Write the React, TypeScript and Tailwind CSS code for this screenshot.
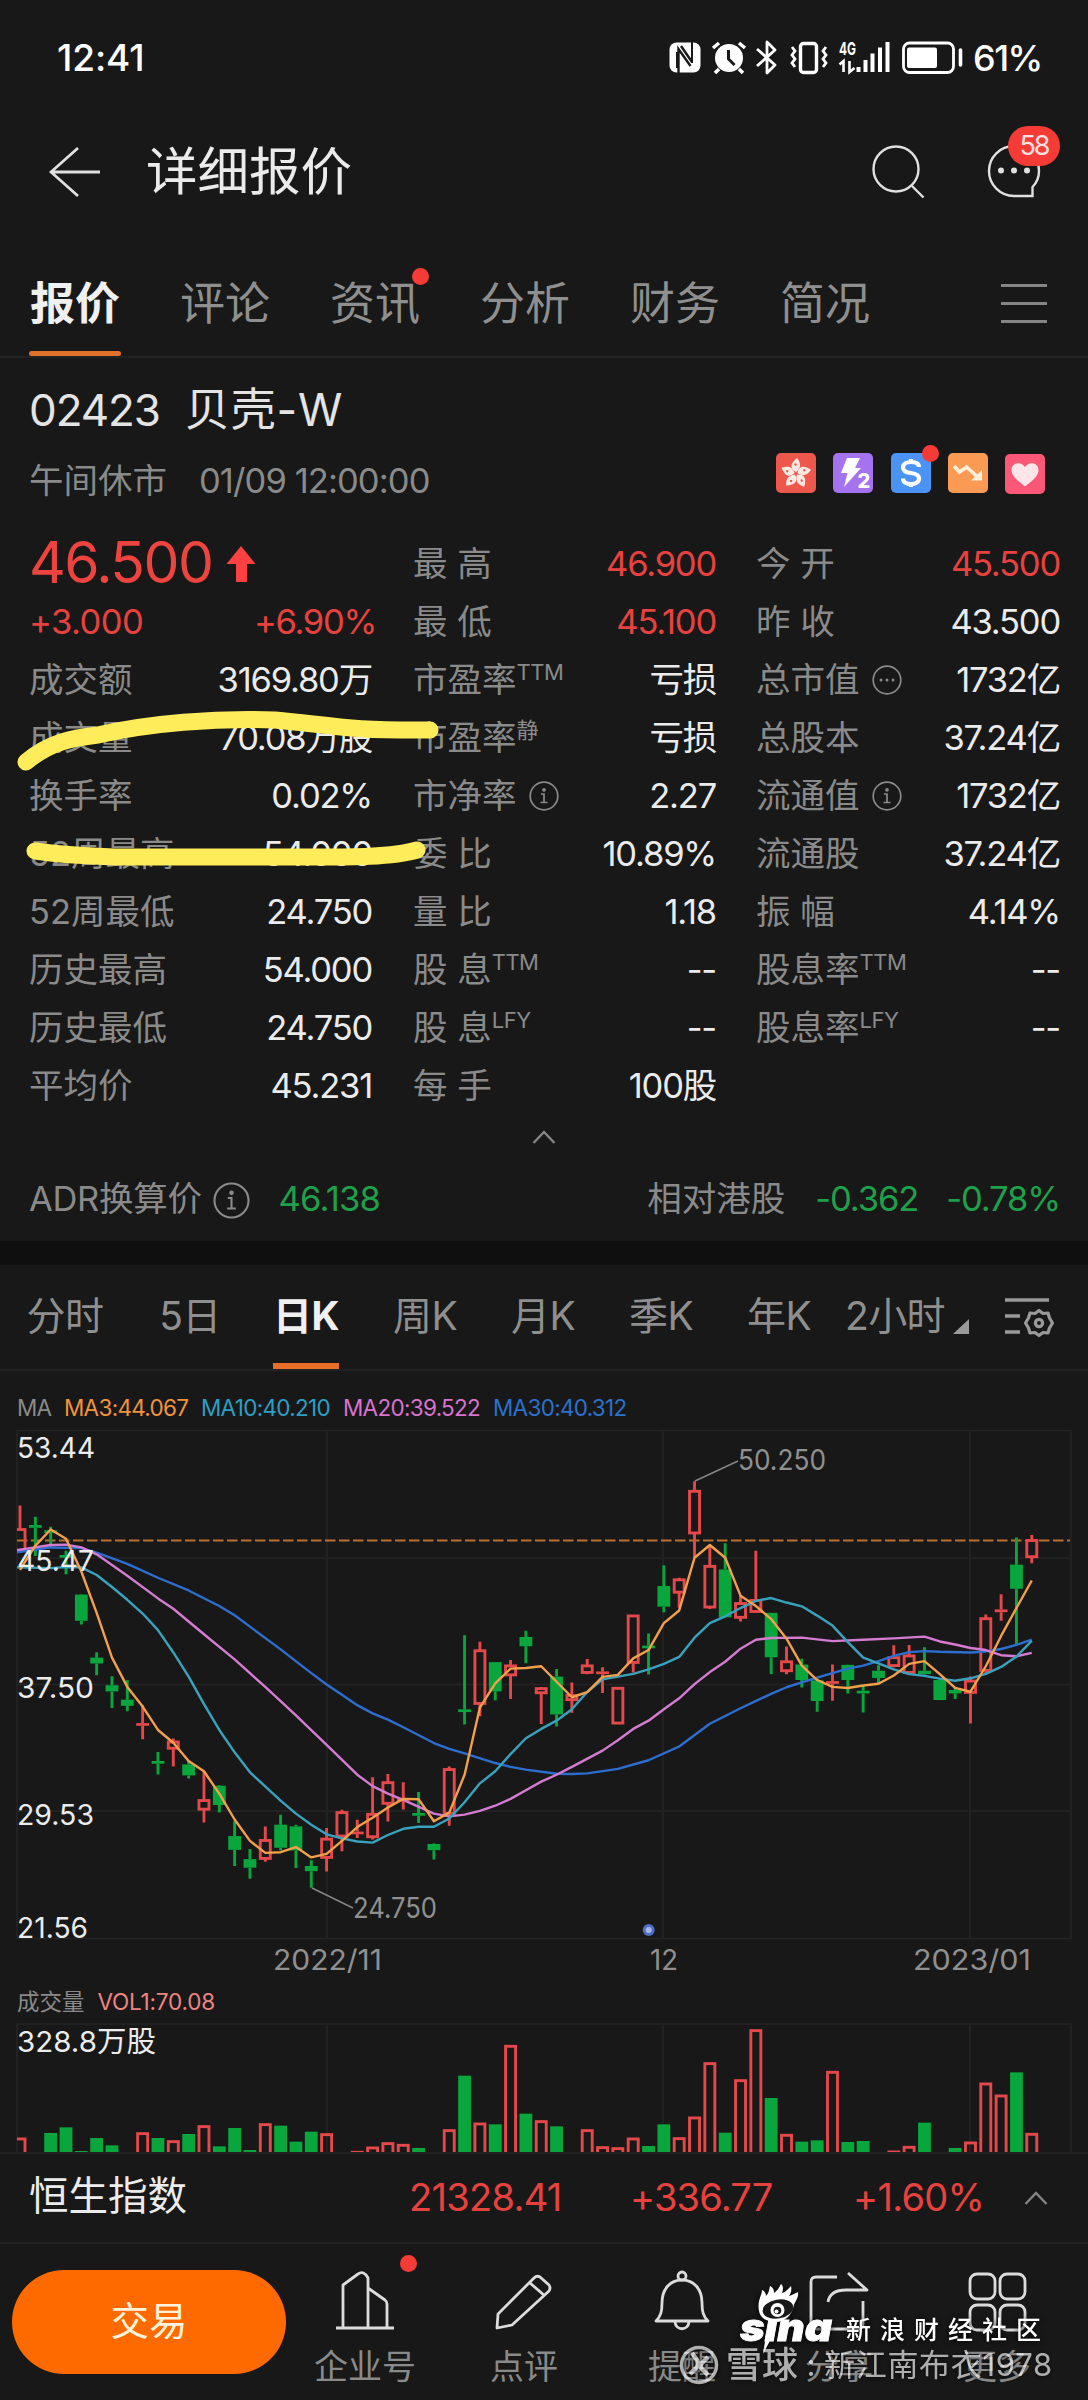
import type { ReactNode } from 'react';
import clsx from 'clsx';

type Tone = 'red' | 'white' | 'green';

interface QuoteCell {
  label: string;
  sup?: string;
  icon?: 'info' | 'more';
  value: string;
  tone?: Tone;
}

const TONES: Record<Tone, string> = {
  red: 'text-[#e8423f]',
  white: 'text-[#ebebeb]',
  green: 'text-[#1fa04a]',
};

const LEFT_CELLS: QuoteCell[] = [
  { label: '成交额', value: '3169.80万' },
  { label: '成交量', value: '70.08万股' },
  { label: '换手率', value: '0.02%' },
  { label: '52周最高', value: '54.000' },
  { label: '52周最低', value: '24.750' },
  { label: '历史最高', value: '54.000' },
  { label: '历史最低', value: '24.750' },
  { label: '平均价', value: '45.231' },
];

const MIDDLE_CELLS: QuoteCell[] = [
  { label: '最 高', value: '46.900', tone: 'red' },
  { label: '最 低', value: '45.100', tone: 'red' },
  { label: '市盈率', sup: 'TTM', value: '亏损' },
  { label: '市盈率', sup: '静', value: '亏损' },
  { label: '市净率', icon: 'info', value: '2.27' },
  { label: '委 比', value: '10.89%' },
  { label: '量 比', value: '1.18' },
  { label: '股 息', sup: 'TTM', value: '--' },
  { label: '股 息', sup: 'LFY', value: '--' },
  { label: '每 手', value: '100股' },
];

const RIGHT_CELLS: QuoteCell[] = [
  { label: '今 开', value: '45.500', tone: 'red' },
  { label: '昨 收', value: '43.500' },
  { label: '总市值', icon: 'more', value: '1732亿' },
  { label: '总股本', value: '37.24亿' },
  { label: '流通值', icon: 'info', value: '1732亿' },
  { label: '流通股', value: '37.24亿' },
  { label: '振 幅', value: '4.14%' },
  { label: '股息率', sup: 'TTM', value: '--' },
  { label: '股息率', sup: 'LFY', value: '--' },
];

// ── Chart data ──
// [direction, high, body top, body bottom, low, volume top]
// prices are offsets from the top of the chart, see y(); volume 0 = no bar
type Candle = ['r' | 'g', number, number, number, number, number];

const CANDLES: Candle[] = [
  ['r', 248, 318, 378, 380, 533], ['g', 281, 305, 313, 395, 0], ['g', 310, 320, 328, 372, 519],
  ['g', 380, 392, 400, 448, 502], ['g', 505, 507, 583, 594, 573], ['g', 674, 690, 707, 741, 534],
  ['g', 744, 770, 788, 836, 556], ['g', 756, 812, 830, 846, 0], ['r', 828, 880, 888, 927, 517],
  ['g', 964, 990, 998, 1029, 534], ['r', 925, 935, 953, 1006, 541], ['g', 990, 1000, 1032, 1041, 522],
  ['r', 1020, 1105, 1130, 1169, 496], ['g', 1060, 1062, 1118, 1140, 559], ['g', 1165, 1208, 1248, 1295, 504],
  ['g', 1246, 1275, 1300, 1332, 570], ['r', 1180, 1221, 1273, 1283, 490], ['g', 1146, 1175, 1242, 1250, 497],
  ['g', 1175, 1180, 1250, 1301, 545], ['g', 1278, 1295, 1310, 1358, 515], ['r', 1185, 1217, 1270, 1311, 520],
  ['r', 1132, 1140, 1208, 1252, 0], ['r', 1161, 1195, 1203, 1214, 573], ['r', 1037, 1145, 1210, 1218, 560],
  ['r', 1028, 1053, 1113, 1166, 547], ['r', 1052, 1099, 1106, 1131, 552], ['g', 1080, 1141, 1149, 1170, 564],
  ['g', 1230, 1231, 1249, 1276, 0], ['r', 1006, 1015, 1142, 1178, 508], ['g', 625, 840, 848, 884, 347],
  ['r', 644, 670, 823, 860, 488], ['g', 703, 703, 788, 814, 493], ['r', 697, 714, 740, 810, 255],
  ['g', 612, 630, 657, 706, 461], ['r', 775, 780, 792, 883, 481], ['g', 723, 745, 855, 890, 499],
  ['r', 762, 800, 812, 850, 0], ['r', 694, 714, 733, 738, 508], ['r', 718, 730, 738, 793, 559],
  ['r', 775, 779, 880, 882, 562], ['r', 566, 569, 704, 733, 533], ['g', 620, 655, 663, 739, 558],
  ['g', 422, 482, 542, 558, 493], ['r', 458, 464, 500, 545, 532], ['r', 178, 207, 328, 400, 470],
  ['r', 365, 425, 543, 549, 307], ['g', 358, 434, 573, 573, 518], ['r', 510, 533, 573, 585, 358],
  ['r', 380, 524, 556, 558, 208], ['g', 560, 560, 689, 738, 414], ['r', 658, 702, 728, 738, 522],
  ['g', 693, 710, 755, 777, 545], ['g', 750, 756, 816, 847, 541], ['r', 710, 758, 766, 815, 333],
  ['g', 710, 711, 755, 794, 546], ['g', 770, 786, 794, 849, 543], ['g', 712, 728, 749, 767, 0],
  ['r', 654, 690, 713, 718, 572], ['r', 653, 685, 733, 738, 558], ['g', 660, 728, 738, 740, 488],
  ['g', 753, 755, 813, 813, 0], ['g', 776, 784, 794, 810, 564], ['r', 745, 758, 791, 881, 545],
  ['r', 565, 577, 727, 738, 368], ['r', 506, 550, 558, 583, 404], ['g', 341, 420, 490, 651, 337],
  ['r', 334, 350, 397, 416, 519],
];

// [candle index, offset]
type Point = [number, number];

const MA3: Point[] = [
  435, 365, 318, 345, 440, 560, 690, 775, 832, 900, 937, 990, 1020, 1085, 1160, 1222, 1257, 1255, 1240, 1270, 1260,
  1222, 1182, 1155, 1125, 1100, 1101, 1165, 1140, 1030, 835, 765, 722, 720, 715, 760, 805, 790, 746, 740, 692, 668,
  590, 553, 400, 363, 400, 510, 540, 578, 635, 713, 755, 775, 778, 771, 766, 742, 708, 700, 738, 778, 789, 715, 627,
  546, 466,
].map((v, i) => [i, v]);

const MA10: Point[] = [
  [-0.2, 428], [2, 430], [3, 427], [4, 428], [5, 450], [6, 485], [7, 522], [8, 562], [9, 610], [10, 675], [11, 745],
  [12, 825], [13, 900], [14, 965], [15, 1023], [17, 1105], [18, 1143], [19, 1175], [20, 1203], [21, 1215], [22, 1224],
  [23, 1227], [24, 1205], [25, 1187], [26, 1181], [27, 1181], [28, 1157], [29, 1110], [30, 1055], [31, 1020],
  [32, 970], [33, 924], [34, 897], [35, 873], [36, 840], [37, 790], [38, 753], [39, 745], [40, 737], [41, 724],
  [42, 708], [43, 688], [44, 632], [45, 590], [46, 570], [47, 546], [48, 525], [49, 517], [50, 530], [51, 541],
  [52, 568], [53, 597], [54, 645], [55, 690], [56, 707], [57, 724], [58, 738], [59, 743], [60, 751], [61, 757],
  [62, 750], [63, 737], [64, 717], [65, 687], [66, 641],
];

const MA20: Point[] = [
  [-0.2, 378], [2, 363], [3, 362], [4, 370], [5, 390], [7, 452], [9, 518], [10, 548], [12, 622], [14, 695],
  [16, 775], [18, 858], [20, 943], [22, 1030], [23, 1063], [24, 1085], [25, 1103], [27, 1143], [28, 1151],
  [29, 1146], [30, 1135], [31, 1120], [32, 1100], [33, 1075], [34, 1050], [35, 1030], [36, 1007], [38, 960],
  [39, 930], [40, 897], [41, 873], [42, 840], [43, 808], [44, 767], [45, 732], [46, 702], [47, 664], [48, 638],
  [49, 633], [51, 632], [53, 642], [55, 638], [57, 634], [59, 629], [60, 643], [61, 652], [62, 662], [63, 668],
  [64, 683], [65, 686], [66, 676],
];

const MA30: Point[] = [
  [-0.2, 384], [2, 370], [4, 372], [5, 385], [7, 418], [9, 458], [11, 495], [13, 540], [14, 567], [15, 600],
  [17, 666], [19, 735], [20, 768], [21, 798], [22, 828], [23, 852], [24, 870], [25, 892], [27, 938], [28, 955],
  [29, 968], [31, 996], [32, 1007], [33, 1015], [35, 1027], [36, 1028], [37, 1026], [39, 1013], [41, 988],
  [43, 948], [45, 882], [47, 837], [49, 795], [50, 776], [51, 762], [52, 748], [53, 735], [54, 722], [55, 713],
  [56, 700], [57, 685], [58, 674], [59, 671], [60, 673], [62, 675], [63, 672], [64, 665], [65, 653], [66, 638],
];

const UP = '#e5484a';
const DOWN = '#08a63c';

const x = (i: number) => 20 + i * 15.33;
const y = (v: number) => v * 0.3444;
const line = (points: Point[]) => points.map(([i, v]) => `${x(i)},${y(v)}`).join(' ');

// ── Icons ──
function StatusIcons() {
  return (
    <svg className="h-[44px] w-[296px]" viewBox="668 36 296 44" fill="none" stroke="#fff">
      <rect x="668.5" y="42.5" width="31" height="30" rx="7" fill="#fff" stroke="none" />
      <path d="M677.500 73V49l12 17M680 46l11 16" stroke="#181818" strokeWidth="2.400" />
      <path d="M691 42v21M676 52v16" stroke="#181818" strokeWidth="2" />
      <circle cx="728" cy="58" r="14" fill="#fff" stroke="none" />
      <path d="M712 48l6-5M744 48l-6-5M718 69l-4 4M738 69l4 4" strokeWidth="3.500" />
      <path d="M727.500 50v9l6 6" stroke="#181818" strokeWidth="3" />
      <path d="M756 49l18 16-8 8V42l8 8-18 16" strokeWidth="2.800" strokeLinejoin="round" />
      <rect x="799.500" y="43.500" width="16" height="29" rx="3" strokeWidth="3.400" />
      <path d="M791 47l3 4-3 4 3 4-3 4 3 4M825 47l-3 4 3 4-3 4 3 4-3 4" strokeWidth="2.800" />
      <text x="838" y="55" fontSize="18" fontWeight="700" fill="#fff" stroke="none" textLength="17" lengthAdjust="spacingAndGlyphs">
        4G
      </text>
      <path d="M838.500 64.500l4-3.500v11M848.500 61v11l5-4" strokeWidth="2.600" />
      <path d="M857.500 67v5M864.500 60v12M871.500 53.500v18.500M879 47.500v24.500M886.500 42v30" strokeWidth="4" />
      <rect x="902.500" y="43" width="50" height="29.500" rx="6" strokeWidth="2.800" />
      <rect x="906" y="47.500" width="30" height="20.500" rx="2" fill="#fff" stroke="none" />
      <path d="M959.500 50v15" strokeWidth="3.600" strokeLinecap="round" />
    </svg>
  );
}

function CircleIcon({ kind, className }: { kind: 'info' | 'more'; className?: string }) {
  return (
    <svg className={clsx('shrink-0', className)} viewBox="0 0 30 30" fill="none" stroke="#8a8a8a" strokeWidth="1.700">
      <circle cx="15" cy="15" r="13.800" />
      {kind === 'info' ? (
        <>
          <path d="M12 13h3v8.500M11.500 21.500h7" />
          <circle cx="15" cy="8.800" r="1" fill="#8a8a8a" />
        </>
      ) : (
        <g fill="#8a8a8a" stroke="none">
          <circle cx="9" cy="15" r="1.500" />
          <circle cx="15" cy="15" r="1.500" />
          <circle cx="21" cy="15" r="1.500" />
        </g>
      )}
    </svg>
  );
}

function Chevron() {
  return (
    <svg className="h-[14px] w-[24px]" viewBox="0 0 24 14" fill="none" stroke="#858585" strokeWidth="2.400">
      <path d="M1.500 13L12 2l10.500 11" />
    </svg>
  );
}

function Dot({ className }: { className: string }) {
  return <span className={clsx('absolute size-[17px] rounded-full bg-[#f53b36]', className)} />;
}

function Tile({ className, children }: { className: string; children: ReactNode }) {
  return (
    <span className={clsx('relative size-[40px] rounded-[5px]', className)}>
      <svg className="size-[40px]" viewBox="0 0 40 40" fill="none">
        {children}
      </svg>
    </span>
  );
}

function TagIcons() {
  return (
    <div className="flex h-[41px] w-[269px] justify-between">
      <Tile className="bg-[#ee574c]">
        {[0, 72, 144, 216, 288].map((deg) => (
          <g key={deg} transform={`rotate(${deg} 20 20.500)`}>
            <path d="M20 19c-6-3-6.500-8 1-14 4 5 4.500 10-1 14z" fill="#ffe9e4" />
            <circle cx="19.500" cy="11.500" r="1.200" fill="#ee574c" />
          </g>
        ))}
      </Tile>
      <Tile className="bg-[#a573ef]">
        <path d="M14 5h13l-5 10h6L11 34l3.500-14H8z" fill="#fff" />
        <text x="24.500" y="34.500" fontSize="20" fontWeight="800" fill="#fff" stroke="#a573ef" strokeWidth="2" paintOrder="stroke">
          2
        </text>
      </Tile>
      <div className="relative flex">
        <Tile className="bg-[#4b93f4]">
          <path d="M28 14c0-4-4-5-8-5s-8 1.500-8 5.500 4 5 8 5.500 8 1.500 8 5.500-4 5.500-8 5.500-8-1.500-8-5.500M20 6v4M20 30v4" stroke="#fff" strokeWidth="4.200" />
        </Tile>
        <Dot className="-top-[8px] left-[31px]" />
      </div>
      <Tile className="bg-[#fb9a52]">
        <path d="M6 13l5.500 6L18.500 14l10 9" stroke="#ffeeda" strokeWidth="3.600" />
        <path d="M34 17v10.500H23z" fill="#ffeeda" />
      </Tile>
      <Tile className="mt-px bg-[#fb5877]">
        <path d="M20 32.500C10 25 6.500 20.500 6.500 16c0-8 10-9 13.500-3 3.500-6 13.500-5 13.500 3 0 4.500-3.500 9-13.500 16.500z" fill="#ffe4ea" />
      </Tile>
    </div>
  );
}

// ── Sections ──
function StatusBar() {
  return (
    <div className="flex h-[116px] items-center justify-between pr-[48px] pl-[57px] font-medium text-white">
      <span className="text-[37px] tracking-[-0.100px]">12:41</span>
      <div className="flex items-center gap-2">
        <StatusIcons />
        <span className="w-[67px] text-[36px] tracking-[-1.500px]">61%</span>
      </div>
    </div>
  );
}

function Header() {
  return (
    <div className="flex h-[112px] items-center pr-[28px] pl-[49px]">
      <svg className="h-[52px] w-[52px]" viewBox="0 0 52 52" fill="none" stroke="#e0e0e0" strokeWidth="2.800">
        <path d="M51 26H2M29 2L2 26l27 24" />
      </svg>
      <h1 className="ml-[45px] text-[51.500px] leading-none text-[#ebebeb]">详细报价</h1>
      <svg className="ml-auto h-[56px] w-[56px]" viewBox="870 144 56 56" fill="none" stroke="#e0e0e0" strokeWidth="2.400">
        <circle cx="895" cy="169" r="22.500" />
        <path d="M911 186l11.500 11.500" />
      </svg>
      <div className="relative ml-[58px] h-[56px] w-[75px]">
        <svg className="h-[56px] w-[60px]" viewBox="984 144 60 56" fill="none" stroke="#e0e0e0" strokeWidth="2.400">
          <path d="M1031.500 196H1013a25 25 0 1 1 25-25c0 6-2.500 12-6.500 16z" />
          <g fill="#e0e0e0" stroke="none">
            <circle cx="1000" cy="170.500" r="3" />
            <circle cx="1013" cy="170.500" r="3" />
            <circle cx="1026" cy="170.500" r="3" />
          </g>
        </svg>
        <span className="absolute -top-[18px] left-[23px] flex h-[40px] w-[52px] items-center justify-center rounded-full bg-[#f53b36] text-[27px] tracking-[-2px] text-[#ffe2e0]">
          58
        </span>
      </div>
    </div>
  );
}

function MainTabs() {
  return (
    <div className="flex h-[130px] items-stretch border-b-2 border-[#222] pr-[40px] pl-[29px]">
      <div className="flex gap-[58px] text-[45px] text-[#8f8f8f]">
        {['报价', '评论', '资讯', '分析', '财务', '简况'].map((tab, i) => (
          <div
            key={tab}
            className={clsx(
              'relative flex w-[92px] items-center justify-center leading-none whitespace-nowrap',
              i === 0 && 'font-bold text-[#f0f0f0]',
            )}
          >
            <span className="mt-[22px]">{tab}</span>
            {i === 0 && <span className="absolute bottom-0 left-0 h-[5px] w-[92px] rounded-sm bg-[#e0702a]" />}
            {tab === '资讯' && <Dot className="top-[40px] left-[83px]" />}
          </div>
        ))}
      </div>
      <svg className="mt-[54px] ml-auto h-[42px] w-[48px]" viewBox="0 0 48 42" stroke="#858585" strokeWidth="2.800">
        <path d="M1 3.500h46M1 21.500h46M1 39.500h46" />
      </svg>
    </div>
  );
}

function StockTitle() {
  return (
    <div className="flex h-[177px] flex-col pr-[43px] pl-[29px]">
      <div className="mt-[25px] flex h-[54px] items-center gap-[25px] text-[44px] text-[#e4e4e4]">
        <span className="tracking-[-1.100px]">02423</span>
        <span className="text-[45px] tracking-[0.800px]">贝壳-W</span>
      </div>
      <div className="mt-[16px] flex h-[56px] items-center text-[34.500px] text-[#8a8a8a]">
        <span>午间休市</span>
        <span className="ml-[32px] tracking-[-0.900px]">01/09 12:00:00</span>
        <div className="mt-[-15px] ml-auto">
          <TagIcons />
        </div>
      </div>
    </div>
  );
}

function Cell({ cell }: { cell: QuoteCell }) {
  return (
    <div className="flex h-[58px] items-center text-[34.500px] whitespace-nowrap">
      <span className="text-[#8a8a8a]">{cell.label}</span>
      {cell.sup && <sup className="-top-[8px] text-[22px] tracking-[-0.500px] text-[#8a8a8a]">{cell.sup}</sup>}
      {cell.icon && <CircleIcon kind={cell.icon} className="ml-[12px] size-[30px]" />}
      <span className={clsx('ml-auto tracking-[-1.200px]', TONES[cell.tone ?? 'white'])}>{cell.value}</span>
    </div>
  );
}

function QuoteGrid() {
  return (
    <div className="relative">
      <div className="flex pl-[29px]">
        <div className="w-[343px]">
          <div className="flex h-[58px] items-center text-[#ee4440]">
            <span className="-mt-[2px] text-[57px] tracking-[-1.500px]">46.500</span>
            <svg className="ml-[14px] h-[36px] w-[30px]" viewBox="0 0 30 36">
              <path d="M15 0l14.500 18H21v18H10V18H.5z" fill="#fb4141" />
            </svg>
          </div>
          <div className="-mr-[4px] flex h-[58px] items-center justify-between text-[34.500px] text-[#e8423f]">
            <span className="tracking-[-0.500px]">+3.000</span>
            <span className="tracking-[-1.300px]">+6.90%</span>
          </div>
          {LEFT_CELLS.map((cell) => (
            <Cell key={cell.label} cell={cell} />
          ))}
        </div>
        <div className="ml-[41px] w-[303px]">
          {MIDDLE_CELLS.map((cell) => (
            <Cell key={cell.label + (cell.sup ?? '')} cell={cell} />
          ))}
        </div>
        <div className="ml-[40px] w-[304px]">
          {RIGHT_CELLS.map((cell) => (
            <Cell key={cell.label + (cell.sup ?? '')} cell={cell} />
          ))}
        </div>
      </div>
      {/* Hand-drawn marker strokes above and below 成交量 / 换手率 */}
      <svg
        className="absolute top-[165px] left-0 h-[180px] w-[460px]"
        viewBox="0 700 460 180"
        fill="none"
        stroke="#ffec5a"
        strokeWidth="17"
        strokeLinecap="round"
        strokeLinejoin="round"
      >
        <path d="M26 762C50 742 72 738 98 735C150 723 215 718 275 720C330 725 350 731 430 730" />
        <path d="M35 851C70 856 90 856 120 857H300C340 857 390 858 417 850" />
      </svg>
    </div>
  );
}

function AdrRow() {
  return (
    <>
      <div className="flex h-[41px] items-center justify-center pt-[2px]">
        <Chevron />
      </div>
      <div className="flex h-[85px] items-center pr-[28px] pl-[29px] text-[34.500px] text-[#8a8a8a]">
        <span className="tracking-[-0.300px]">ADR换算价</span>
        <CircleIcon kind="info" className="mt-[4px] ml-[11px] size-[37px]" />
        <span className="ml-[29px] tracking-[-0.800px] text-[#1fa04a]">46.138</span>
        <span className="ml-auto">相对港股</span>
        <span className="ml-[30px] tracking-[-1.100px] text-[#1fa04a]">-0.362</span>
        <span className="ml-[28px] tracking-[-1.100px] text-[#1fa04a]">-0.78%</span>
      </div>
      <div className="h-[24px] bg-[#0f0f0f]" />
    </>
  );
}

const PERIODS = [
  { label: '分时', box: 'w-[80px] ml-[25px]' },
  { label: '5日', box: 'w-[66px] ml-[52px]' },
  { label: '日K', box: 'w-[66px] ml-[50px]' },
  { label: '周K', box: 'w-[66px] ml-[53px]' },
  { label: '月K', box: 'w-[66px] ml-[52px]' },
  { label: '季K', box: 'w-[66px] ml-[52px]' },
  { label: '年K', box: 'w-[66px] ml-[52px]' },
  { label: '2小时', box: 'w-[102px] ml-[32px]' },
];

function PeriodTabs() {
  return (
    <div className="flex h-[106px] border-b-2 border-[#222] text-[39px] text-[#8f8f8f]">
      {PERIODS.map(({ label, box }) => (
        <div
          key={label}
          className={clsx(
            'relative flex items-center justify-center pb-[2px] tracking-[-0.600px] whitespace-nowrap',
            box,
            label === '日K' && 'font-bold text-[#f0f0f0]',
          )}
        >
          {label}
          {label === '日K' && <span className="absolute bottom-0 left-0 h-[6px] w-[66px] bg-[#e86f28]" />}
        </div>
      ))}
      <svg className="mt-[54px] ml-[7px] h-[15px] w-[16px]" viewBox="0 0 16 15">
        <path d="M16 0v15H0z" fill="#9a9a9a" />
      </svg>
      <svg className="mt-[31px] ml-[35px] h-[42px] w-[50px]" viewBox="1004 1296 50 42" fill="none" stroke="#9a9a9a" strokeWidth="3.200">
        <path d="M1005 1300h44M1005 1316h15M1005 1332h15" strokeWidth="3.600" />
        <path
          d="M1039 1310.500l4 3 5-.5 1.500 5 3 5-3 5-1.500 5-5-.5-4 3-4-3-5 .5-1.500-5-3-5 3-5 1.500-5 5 .5z"
          strokeLinejoin="round"
        />
        <circle cx="1039" cy="1323" r="3.600" />
      </svg>
    </div>
  );
}

function MaLegend() {
  return (
    <div className="flex h-[49px] items-center pt-[25px] pl-[17px] text-[22.500px] tracking-[-0.700px]">
      <span className="w-[47px] text-[#8a8a8a]">MA</span>
      <span className="w-[137px] text-[#f0943c]">MA3:44.067</span>
      <span className="w-[142px] text-[#2c9fc4]">MA10:40.210</span>
      <span className="w-[150px] text-[#d873cf]">MA20:39.522</span>
      <span className="text-[#2a72cc]">MA30:40.312</span>
    </div>
  );
}

const PRICE_LABELS = [
  { text: '53.44', y: 37.500, w: 78 },
  { text: '45.47', y: 150.500, w: 77 },
  { text: '37.50', y: 277.500, w: 77 },
  { text: '29.53', y: 404.500, w: 77 },
  { text: '21.56', y: 517.500, w: 71 },
];

function KLineChart() {
  return (
    <svg className="block h-[556px] w-[1088px]" viewBox="0 0 1088 556" fill="none">
      <g stroke="#242424" strokeWidth="1.500">
        <rect x="17" y="10.500" width="1054" height="508" />
        <path d="M17 138h1054M17 264.500h1054M17 391h1054M327 10.500v508M663 10.500v508M970 10.500v508" />
      </g>
      <path d="M17 120.500h1053" stroke="#b8702f" strokeWidth="2.200" strokeDasharray="10.500 3.500" />
      <defs>
        <clipPath id="plot">
          <rect x="17" y="0" width="1054" height="556" />
        </clipPath>
      </defs>
      <g clipPath="url(#plot)">
        {CANDLES.map(([dir, high, top, bottom, low], i) => {
          const color = dir === 'r' ? UP : DOWN;
          const height = y(bottom - top);
          return (
            <g key={i} stroke={color} strokeWidth="2.900">
              <path d={`M${x(i)} ${y(high)}V${y(top)}M${x(i)} ${y(bottom)}V${y(low)}`} />
              {dir === 'r' && height > 3 ? (
                <rect x={x(i) - 5} y={y(top)} width="10" height={height} />
              ) : (
                <rect x={x(i) - 6.400} y={y(top)} width="12.800" height={height} fill={color} stroke="none" />
              )}
            </g>
          );
        })}
        <g strokeWidth="2.400" strokeLinejoin="round">
          <polyline points={line(MA30)} stroke="#2c6fd0" />
          <polyline points={line(MA20)} stroke="#d67bd2" />
          <polyline points={line(MA10)} stroke="#38a3bf" />
          <polyline points={line(MA3)} stroke="#f3a04a" />
        </g>
      </g>
      <circle cx="648.700" cy="510" r="6" fill="#4d6fc4" />
      <circle cx="648.700" cy="510" r="3" fill="#a8b8ee" />
      <path d="M312 468l41 20M695 61l43-20" stroke="#858585" strokeWidth="1.500" />
      <g fontSize="29" fill="#ececec">
        {PRICE_LABELS.map((label) => (
          <text key={label.text} x="17" y={label.y} textLength={label.w} lengthAdjust="spacingAndGlyphs">
            {label.text}
          </text>
        ))}
      </g>
      <g fontSize="28" fill="#909090">
        <text x="353" y="498" textLength="84" lengthAdjust="spacingAndGlyphs">24.750</text>
        <text x="738" y="50" textLength="88" lengthAdjust="spacingAndGlyphs">50.250</text>
        <text x="273" y="549.500" textLength="109" lengthAdjust="spacingAndGlyphs">2022/11</text>
        <text x="650" y="549.500" textLength="28" lengthAdjust="spacingAndGlyphs">12</text>
        <text x="913" y="549.500" textLength="118" lengthAdjust="spacingAndGlyphs">2023/01</text>
      </g>
    </svg>
  );
}

function VolumeChart() {
  return (
    <>
      <div className="flex h-[46px] items-center gap-[13px] pt-[6px] pl-[17px] text-[22.500px] text-[#8a8a8a]">
        <span>成交量</span>
        <span className="tracking-[-0.200px] text-[#ee8580]">VOL1:70.08</span>
      </div>
      <svg className="block h-[130px] w-[1088px]" viewBox="0 0 1088 130" fill="none">
        <path d="M17 130V2h1054v128M327 2v128M663 2v128M970 2v128" stroke="#242424" strokeWidth="1.500" />
        <clipPath id="volume">
          <rect x="17" y="0" width="1054" height="130" />
        </clipPath>
        <g clipPath="url(#volume)">
          {CANDLES.map(([dir, , , , , volume], i) => {
            if (!volume) return null;
            const top = volume / 3 - 62;
            return dir === 'r' ? (
              <rect key={i} x={x(i) - 5} y={top + 1.300} width="10" height="140" stroke={UP} strokeWidth="2.900" />
            ) : (
              <rect key={i} x={x(i) - 6.400} y={top} width="12.800" height="140" fill={DOWN} />
            );
          })}
        </g>
        <text x="17" y="29.500" fontSize="29" fill="#ececec" textLength="139" lengthAdjust="spacingAndGlyphs">
          328.8万股
        </text>
      </svg>
    </>
  );
}

function IndexBar() {
  return (
    <div className="flex h-[92px] items-center border-y-2 border-[#232323] pr-[40px] pb-[2px] pl-[29px] text-[38px] text-[#e8423f]">
      <span className="w-[380px] text-[39.500px] text-[#ececec]">恒生指数</span>
      <span className="w-[221px] tracking-[-0.700px]">21328.41</span>
      <span className="w-[223px] tracking-[-0.800px]">+336.77</span>
      <span className="tracking-[-0.700px]">+1.60%</span>
      <span className="mt-px ml-auto">
        <Chevron />
      </span>
    </div>
  );
}

function NavItem({ label, box, children }: { label: string; box: string; children: ReactNode }) {
  return (
    <div className={clsx('relative flex flex-col items-center pt-[26px] whitespace-nowrap', box)}>
      <svg className="h-[62px] w-[62px]" viewBox="0 0 62 62" fill="none" stroke="#dcdcdc" strokeWidth="2.800" strokeLinejoin="round">
        {children}
      </svg>
      <span className="mt-[10px] text-[34px] leading-[50px] text-[#8a8a8a]">{label}</span>
    </div>
  );
}

function BottomNav() {
  return (
    <div className="relative flex h-[156px] overflow-hidden">
      <button className="mt-[26px] ml-[12px] h-[104px] w-[274px] rounded-full bg-[#ff6a00] text-[38.500px] text-[#fff3dc]">
        交易
      </button>
      <NavItem label="企业号" box="w-[102px] ml-[28px]">
        <path d="M2 58h58M9 58V15L24 4q3-2 5.500-1T34 8v50M34 18l17 12q2 1.500 2 4v24" />
      </NavItem>
      <Dot className="top-[11px] left-[400px]" />
      <NavItem label="点评" box="w-[102px] ml-[57px]">
        <path d="M4 58l1-14L41 8q3-3 6-1l9 8q2 3 0 6L19 55zM37 13l15 13" />
      </NavItem>
      <NavItem label="提醒" box="w-[102px] ml-[56px]">
        <path d="M5 51c5-5 6-10 6-18 0-14 8-23 20-23s20 9 20 23c0 8 1 13 6 18zM24 52c1 9 13 9 14 0" />
        <circle cx="31" cy="6" r="4" />
      </NavItem>
      <NavItem label="分享" box="w-[102px] ml-[55px]">
        <path d="M29 7H8Q3 7 3 12v42q0 5 5 5h42q5 0 5-5V31M40 3l19 17H38Q22 20 20 32" />
      </NavItem>
      <NavItem label="更多" box="w-[102px] ml-[56px]">
        <rect x="4" y="4" width="25" height="25" rx="7" />
        <rect x="34" y="4" width="25" height="25" rx="7" />
        <rect x="4" y="35" width="25" height="25" rx="7" />
        <rect x="34" y="35" width="25" height="25" rx="7" />
      </NavItem>
      <Watermarks />
    </div>
  );
}

function Watermarks() {
  return (
    <>
      <div className="absolute top-[39px] left-[739px] flex text-white [filter:drop-shadow(0_1px_3px_rgba(0,0,0,0.9))]">
        <svg className="h-[72px] w-[100px]" viewBox="736 2283 100 72">
          <path
            d="M756 2311c-2-11 3-15 3-21 3 1 4 4 4 6 3-3 3-6 4-10 4 2 4 5 4 7 3-2 5-5 7-9 3 2 2 7 1 9 4-1 6-4 9-7 1 4 0 7-2 10 4-1 6-3 9-4 1 6-3 9-4 13-2 11-10 17-18 17-9 0-16-4-17-11z"
            fill="#fff"
          />
          <ellipse cx="775" cy="2309" rx="15.500" ry="9.500" transform="rotate(-10 775 2309)" fill="#181818" />
          <circle cx="774.500" cy="2310" r="7" fill="#fff" />
          <circle cx="774.500" cy="2310.500" r="3.800" fill="#181818" />
          <circle cx="773.500" cy="2311.500" r="2" fill="#fff" />
          <path d="M763 2335l-3 19 10-19z" fill="#fff" />
          <text x="737" y="2341" fontSize="38" fontWeight="900" fontStyle="italic" fill="#fff" stroke="#fff" strokeWidth="0.800" textLength="92" lengthAdjust="spacingAndGlyphs">
            sına
          </text>
        </svg>
        <span className="mt-[29px] ml-[7px] text-[25px] leading-[36px] font-medium tracking-[9px] whitespace-nowrap">
          新浪财经社区
        </span>
      </div>
      <div className="absolute top-[96px] left-[679px] flex items-center whitespace-nowrap text-white opacity-65 [filter:drop-shadow(0_1px_2px_rgba(0,0,0,0.9))]">
        <svg className="size-[40px]" viewBox="0 0 40 40" fill="none" stroke="#fff">
          <circle cx="20" cy="20" r="17.500" strokeWidth="3.500" />
          <path d="M13 8l5 7q3 5-2 9l-5 5M29 12l-6 6q-3 3 0 6l6 6" strokeWidth="4.500" />
        </svg>
        <span className="ml-[7px] text-[36px] leading-[50px] font-medium">雪球</span>
        <span className="w-[26px] text-center text-[30px] font-medium">:</span>
        <span className="text-[31px] leading-[50px] tracking-[0.700px]">新江南布衣1978</span>
      </div>
    </>
  );
}

export default function App() {
  return (
    <div className="flex h-[2400px] w-[1088px] flex-col overflow-hidden bg-[#181818] font-[Inter,'Noto_Sans_CJK_SC',sans-serif]">
      <StatusBar />
      <Header />
      <MainTabs />
      <StockTitle />
      <QuoteGrid />
      <AdrRow />
      <PeriodTabs />
      <MaLegend />
      <KLineChart />
      <VolumeChart />
      <IndexBar />
      <BottomNav />
    </div>
  );
}
